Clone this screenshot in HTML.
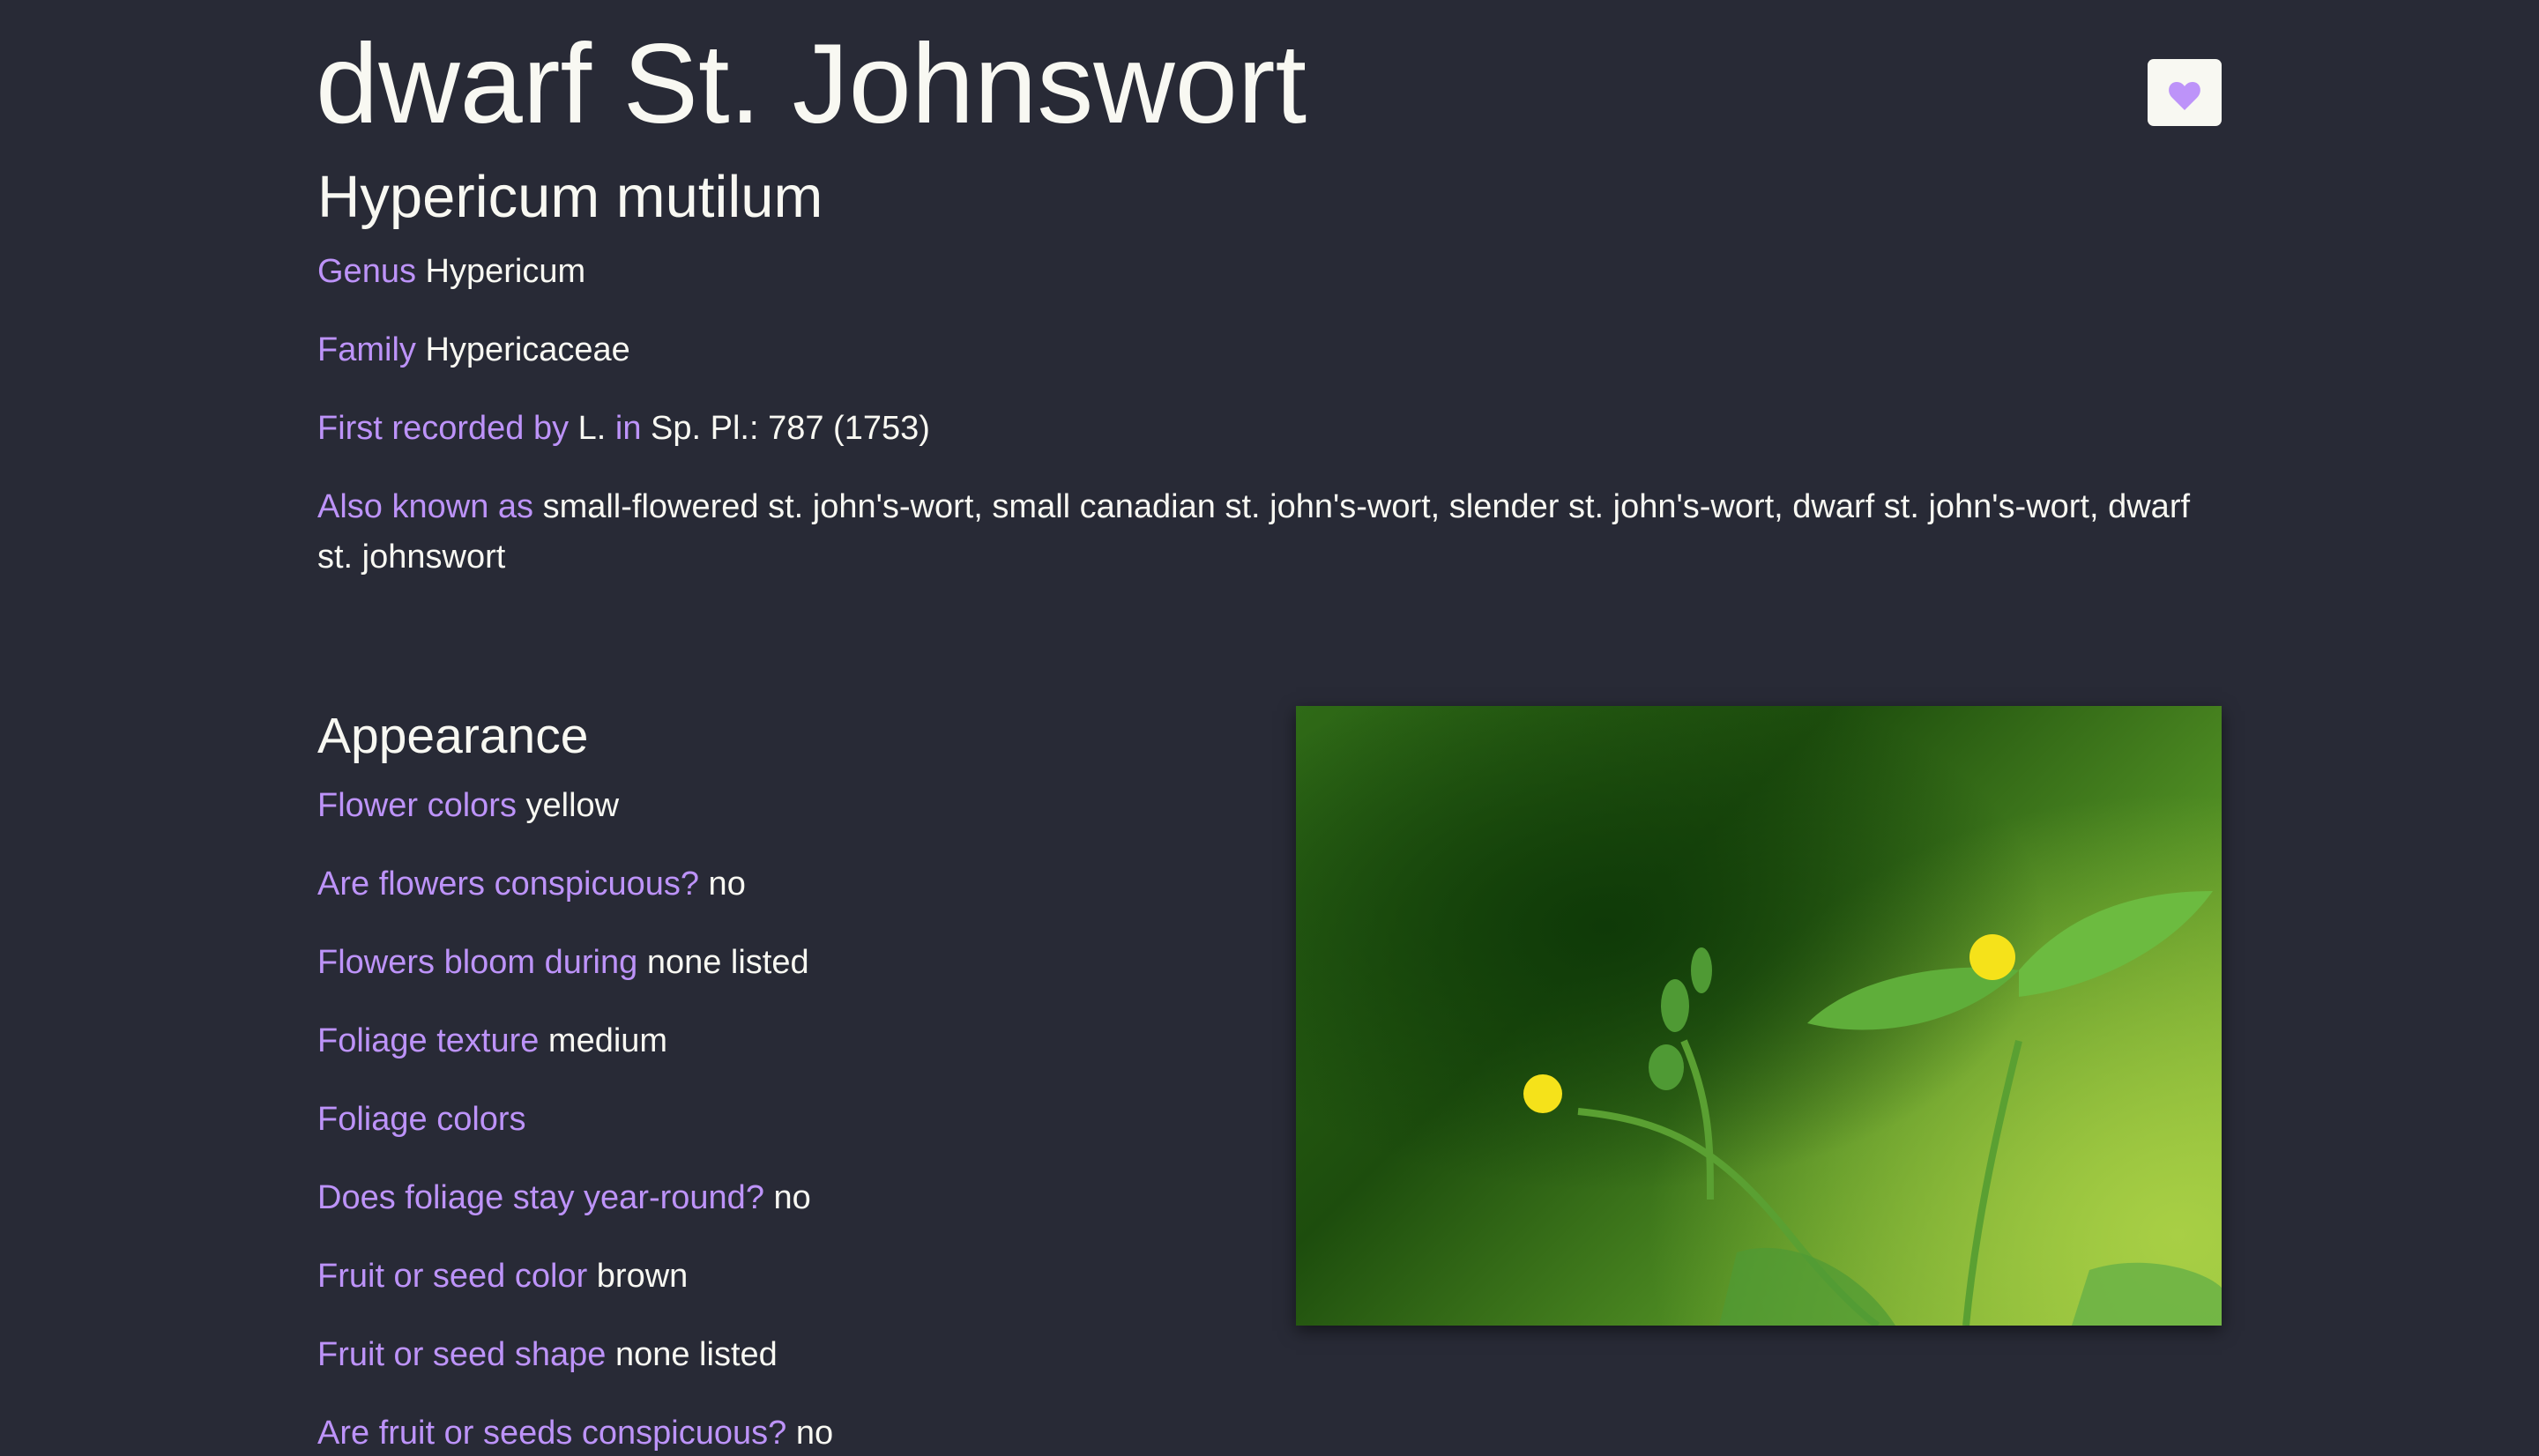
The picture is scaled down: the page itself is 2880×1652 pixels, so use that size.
<!DOCTYPE html>
<html><head><meta charset="utf-8"><style>
html,body{margin:0;padding:0;background:#282a36;width:2880px;height:1652px;overflow:hidden;font-family:"Liberation Sans",sans-serif;color:#f8f8f2}
.a{position:absolute;white-space:nowrap}
h1{position:absolute;left:358px;top:26px;margin:0;font-weight:400;font-size:128px;line-height:140px;letter-spacing:0}
.sub{left:360px;top:184px;font-size:67px;line-height:80px}
.r{left:360px;font-size:38px;line-height:44px}
.r b{font-weight:400;color:#bd93f9}
.btn{position:absolute;left:2436px;top:67px;width:84px;height:76px;background:#f8f8f2;border-radius:7px}
.img{position:absolute;left:1470px;top:801px;width:1050px;height:703px;box-shadow:0 6px 18px rgba(0,0,0,.5);overflow:hidden;
background:radial-gradient(ellipse 500px 300px at 350px 250px,#0f3a08,transparent),radial-gradient(ellipse 600px 500px at 1000px 600px,#a8cf45,transparent),linear-gradient(135deg,#2f6a17 0%,#1d4d0d 35%,#4d8a22 65%,#8fc03a 100%)}
</style></head><body>
<h1>dwarf St. Johnswort</h1>
<div class="btn"><svg width="84" height="76" viewBox="0 0 84 76"><path d="M42 58 L28 44 C21 37 24 26 33 26 C37 26 40 28 42 31 C44 28 47 26 51 26 C60 26 63 37 56 44 Z" fill="#bd93f9"/></svg></div>
<div class="a sub">Hypericum mutilum</div>
<div class="a r" style="top:286px"><b>Genus</b> Hypericum</div>
<div class="a r" style="top:375px"><b>Family</b> Hypericaceae</div>
<div class="a r" style="top:464px"><b>First recorded by</b> L. <b>in</b> Sp. Pl.: 787 (1753)</div>
<div class="a r" style="top:553px"><b>Also known as</b> small-flowered st. john's-wort, small canadian st. john's-wort, slender st. john's-wort, dwarf st. john's-wort, dwarf</div>
<div class="a r" style="top:610px">st. johnswort</div>
<div class="a" style="left:360px;top:800px;font-size:57px;line-height:70px">Appearance</div>
<div class="a r" style="top:892px"><b>Flower colors</b> yellow</div>
<div class="a r" style="top:981px"><b>Are flowers conspicuous?</b> no</div>
<div class="a r" style="top:1070px"><b>Flowers bloom during</b> none listed</div>
<div class="a r" style="top:1159px"><b>Foliage texture</b> medium</div>
<div class="a r" style="top:1248px"><b>Foliage colors</b></div>
<div class="a r" style="top:1337px"><b>Does foliage stay year-round?</b> no</div>
<div class="a r" style="top:1426px"><b>Fruit or seed color</b> brown</div>
<div class="a r" style="top:1515px"><b>Fruit or seed shape</b> none listed</div>
<div class="a r" style="top:1604px"><b>Are fruit or seeds conspicuous?</b> no</div>
<div class="img"><svg width="1050" height="703" viewBox="0 0 1050 703">
<g fill="none" stroke="#5aa032" stroke-width="8">
<path d="M820 380 C790 500 770 600 760 703"/>
<path d="M320 460 C420 470 480 500 560 600 C600 650 640 690 660 703"/>
<path d="M440 380 C470 450 470 500 470 560"/>
</g>
<path d="M580 360 C640 300 760 290 820 300 C760 360 660 380 580 360Z" fill="#5fae3a"/>
<path d="M820 300 C880 230 960 210 1040 210 C990 280 900 320 820 330Z" fill="#6cbb40"/>
<path d="M500 620 C560 600 640 640 680 703 L480 703Z" fill="#4f9a34" opacity=".7"/>
<path d="M900 640 C960 620 1030 640 1050 660 L1050 703 L880 703Z" fill="#66b046" opacity=".8"/>
<g fill="#f5e21a"><circle cx="280" cy="440" r="22"/><circle cx="790" cy="285" r="26"/></g>
<g fill="#4f9a34"><ellipse cx="430" cy="340" rx="16" ry="30"/><ellipse cx="460" cy="300" rx="12" ry="26"/><ellipse cx="420" cy="410" rx="20" ry="26"/></g>
</svg></div>
</body></html>
